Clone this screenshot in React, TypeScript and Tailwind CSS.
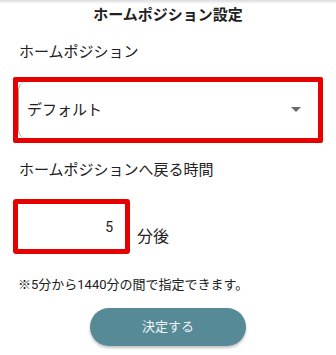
export default function App() {
  return (
    <div
      className="w-[336px] h-[355px] bg-white text-[#212121] overflow-hidden"
      style={{ fontFamily: 'Roboto, "Noto Sans CJK JP", sans-serif' }}
    >
      {/* header shadow */}
      <div className="h-[4px] bg-gradient-to-b from-[#dcdcdc] to-white" />

      <h1 className="h-[22px] leading-[22px] text-center text-[15px] font-bold">ホームポジション設定</h1>

      <div className="px-[13px]">
        <p className="mt-[15px] pl-[6px] text-[15px] leading-[22px]">ホームポジション</p>

        {/* select */}
        <div className="mt-[14px] h-[66px] border-[5px] border-[#e60000] rounded-[2px] bg-white">
          <div className="h-full flex items-center justify-between border-l border-[#9e9e9e] rounded-l-[8px] pl-[8px] pr-[13px]">
            <span className="text-[15px] leading-[22px]">デフォルト</span>
            <svg width="10" height="5" viewBox="0 0 10 5" className="mt-[-2px] mr-[4px]">
              <path d="M0 0h10L5 5z" fill="#6b6b6b" />
            </svg>
          </div>
        </div>

        <p className="mt-[16px] pl-[6px] text-[15px] leading-[22px]">ホームポジションへ戻る時間</p>

        {/* minutes input */}
        <div className="mt-[18px] flex items-end">
          <div className="w-[117px] h-[55px] border-[5px] border-[#e60000] rounded-[3px] bg-white flex items-center justify-end pr-[12px]">
            <span className="text-[14px] leading-[20px]">5</span>
          </div>
          <span className="ml-[7px] mb-[6px] text-[16px] leading-[22px]">分後</span>
        </div>

        <p className="mt-[21px] pl-[5px] text-[13px] leading-[20px]">※5分から1440分の間で指定できます。</p>
      </div>

      <button className="mt-[13px] mx-auto flex items-center justify-center w-[156px] h-[38px] rounded-full bg-[#568a96] text-[#eef4f5] text-[13px] shadow-[0_2px_3px_rgba(0,0,0,0.25)]">
        決定する
      </button>
    </div>
  );
}
